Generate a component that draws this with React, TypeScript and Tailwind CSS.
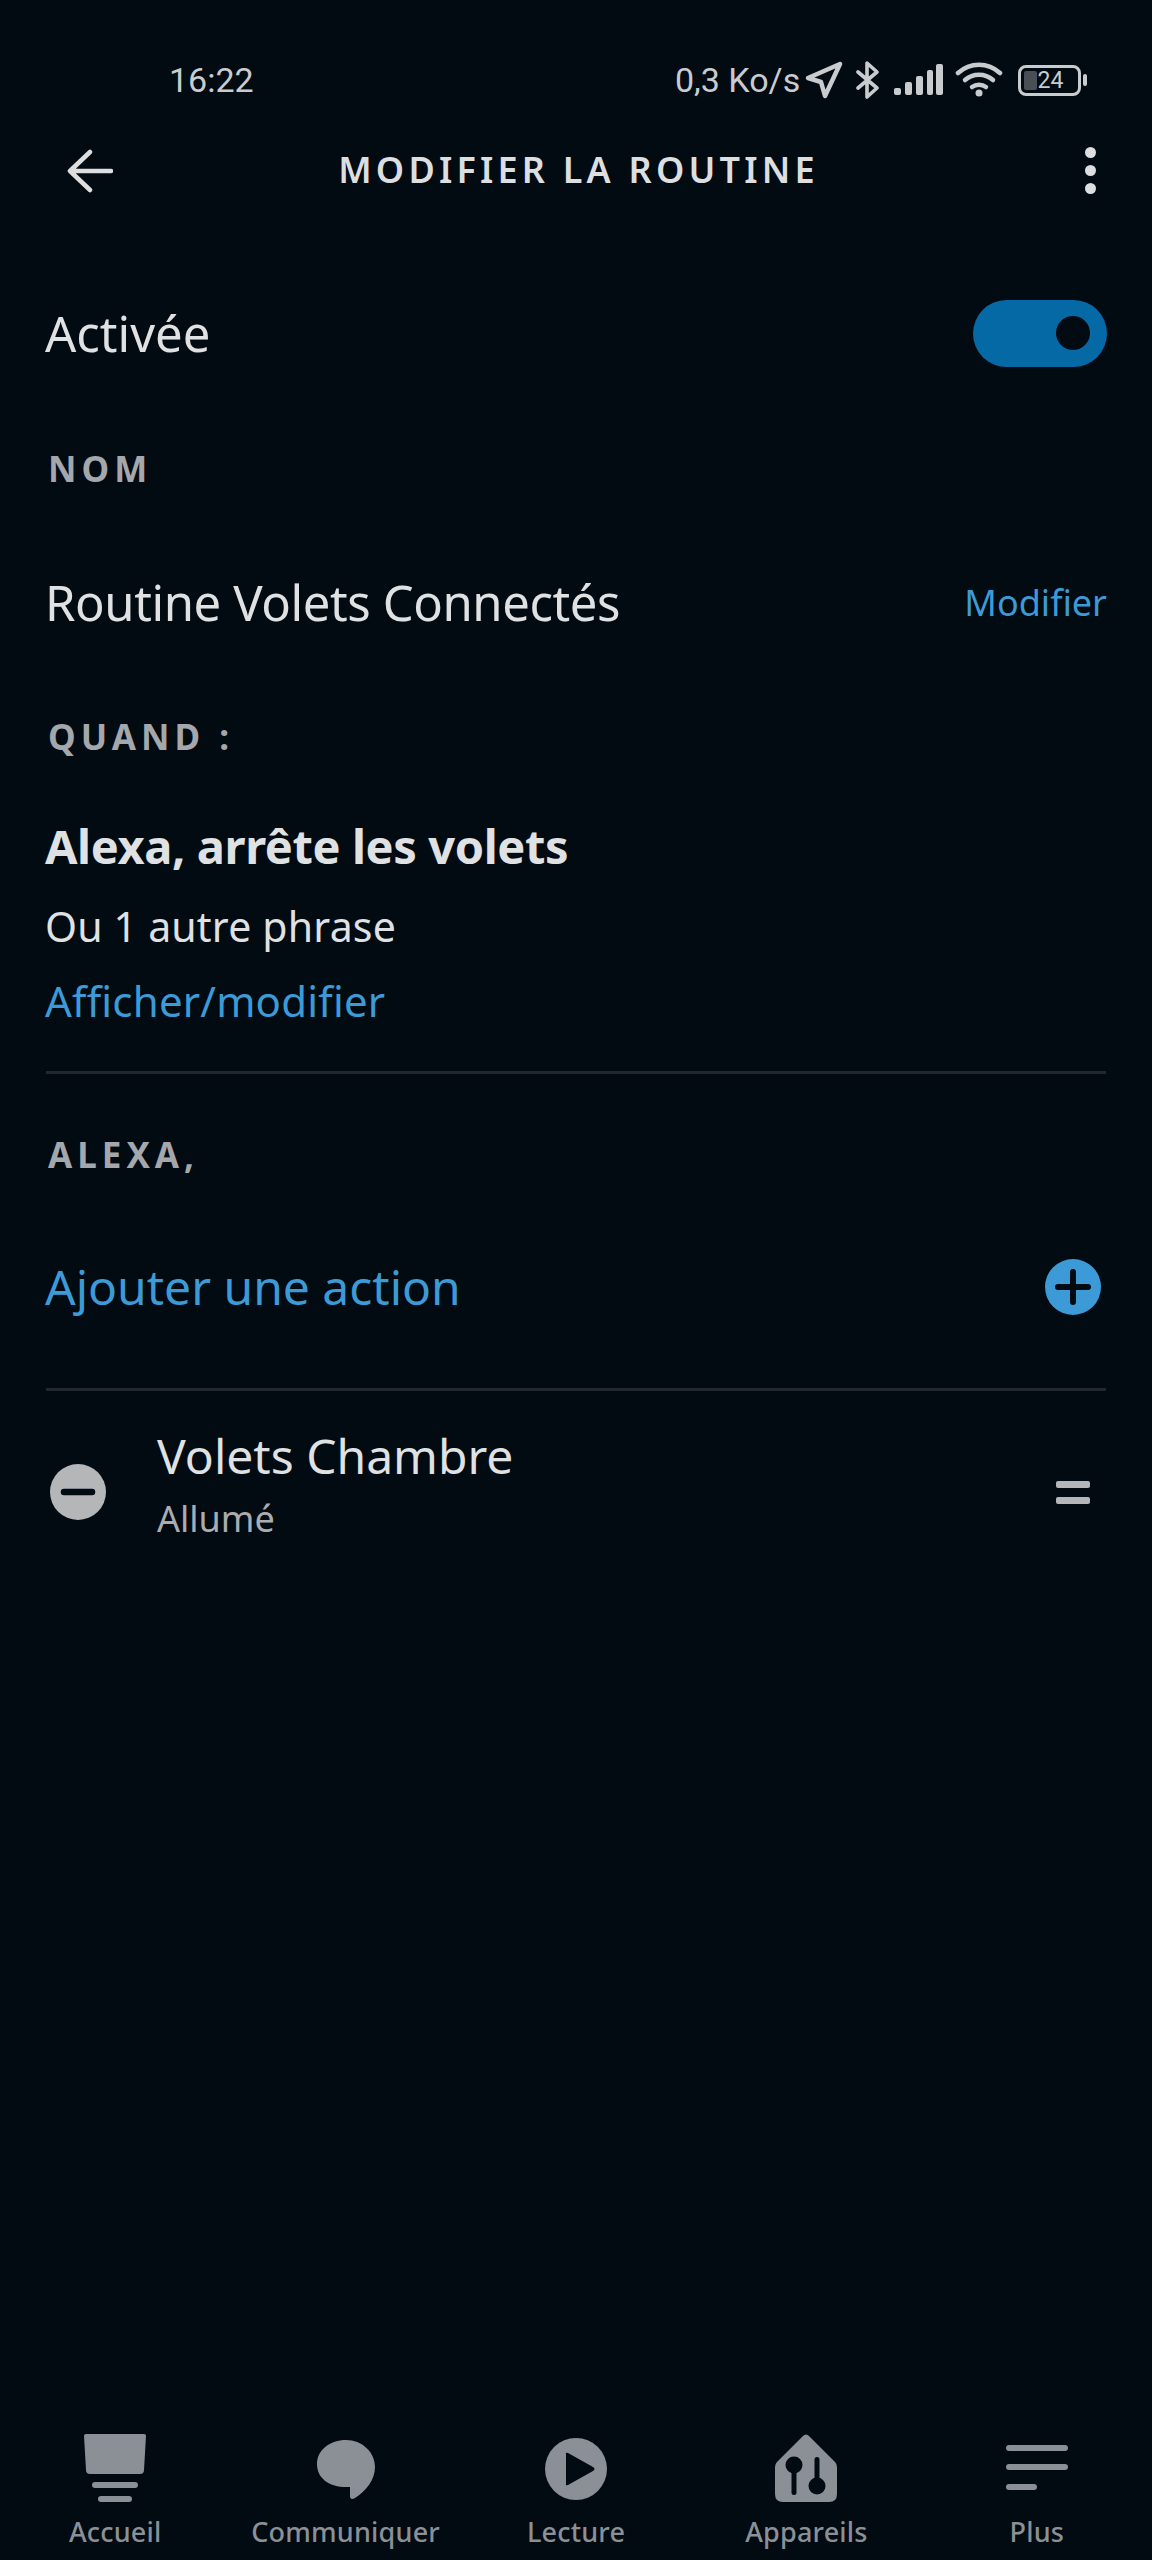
import React from 'react';

const font = { fontFamily: '"Noto Sans", sans-serif' };

const SectionLabel = ({ children, className }: { children: React.ReactNode; className: string }) => (
  <div className={`flex items-center pl-[48px] text-[35px] font-bold leading-none tracking-[5px] text-[#a4a7ab] ${className}`}>
    {children}
  </div>
);

const Divider = () => <div className="mx-[46px] h-[3px] bg-[#23282f]" />;

const StatusBar = () => (
  <div className="flex h-[124px] items-start justify-between pt-[60px] pl-[169px] pr-[65px] font-['Roboto'] text-[34px] leading-[40px] text-[#c9cccf]">
    <span>16:22</span>
    <div className="flex items-center">
      <span className="w-[130px]">0,3 Ko/s</span>
      <svg width="38" height="38" viewBox="0 0 38 38" fill="none" stroke="#c9cccf" strokeWidth="4.5" strokeLinejoin="round">
        <path d="M3 17 L35 3 L20 35 L16 21 Z" />
      </svg>
      <svg className="ml-[13px]" width="24" height="38" viewBox="0 0 24 38" fill="none" stroke="#c9cccf" strokeWidth="3.6" strokeLinecap="round" strokeLinejoin="round">
        <path d="M2 11 L21 27 L11 36 L11 2 L21 11 L2 27" />
      </svg>
      <svg className="ml-[14px]" width="49" height="32" viewBox="0 0 49 32" fill="#c9cccf">
        <rect x="0" y="24" width="7" height="7" rx="2" />
        <rect x="11" y="18" width="7" height="13" rx="2" />
        <rect x="22" y="12" width="7" height="19" rx="2" />
        <rect x="33" y="6" width="6" height="25" rx="2" />
        <rect x="42" y="0" width="7" height="31" rx="2" />
      </svg>
      <svg className="ml-[12px]" width="48" height="36" viewBox="0 0 48 36" fill="none" stroke="#c9cccf" strokeWidth="4.5" strokeLinecap="round">
        <path d="M3 11 C15 0 33 0 45 11" />
        <path d="M10 18 C18 11 30 11 38 18" />
        <path d="M17 25 C21 22 27 22 31 25" />
        <circle cx="24" cy="31" r="3.5" fill="#c9cccf" stroke="none" />
      </svg>
      <div className="relative ml-[15px] flex h-[31px] w-[63px] items-center justify-center rounded-[8px] border-[3px] border-[#c9cccf] pl-[2px] text-[23px] leading-none">
        <div className="absolute top-[3px] bottom-[3px] left-[3px] w-[13px] rounded-[2px] bg-[#4a4e55]" />
        <span className="relative">24</span>
      </div>
      <div className="ml-[2px] h-[12px] w-[4px] rounded-[2px] bg-[#c9cccf]" />
    </div>
  </div>
);

const Header = () => (
  <div className="relative flex h-[92px] items-center justify-center">
    <svg className="absolute left-[67px] top-[25px]" width="46" height="44" viewBox="0 0 46 44" fill="none" stroke="#dcdee0" strokeWidth="4.5" strokeLinecap="round" strokeLinejoin="round">
      <path d="M44 22 L3 22 M23 3 L3 22 L23 41" />
    </svg>
    <span className="ml-[5px] text-[36px] font-semibold leading-none tracking-[4.2px] text-[#dcdee0]">MODIFIER LA ROUTINE</span>
    <div className="absolute right-[56px] top-[23px] flex flex-col gap-[7px]">
      <div className="h-[11px] w-[11px] rounded-full bg-[#dcdee0]" />
      <div className="h-[11px] w-[11px] rounded-full bg-[#dcdee0]" />
      <div className="h-[11px] w-[11px] rounded-full bg-[#dcdee0]" />
    </div>
  </div>
);

const NavItem = ({ label, icon }: { label: string; icon: React.ReactNode }) => (
  <div className="flex flex-col items-center">
    <div className="flex h-[70px] items-end">{icon}</div>
    <span className="mt-[12px] text-[27px] font-medium leading-[36px] tracking-[0.2px] text-[#8b9096]">{label}</span>
  </div>
);

const BottomNav = () => (
  <div className="grid h-[128px] grid-cols-5">
    <NavItem
      label="Accueil"
      icon={
        <svg width="62" height="68" viewBox="0 0 62 68" fill="#8b9096">
          <path d="M2 0 H60 Q62 0 62 2 L60 36 Q60 40 56 40 H6 Q2 40 2 36 L0 2 Q0 0 2 0 Z" />
          <rect x="8" y="48" width="46" height="6" rx="3" />
          <rect x="14" y="62" width="34" height="6" rx="3" />
        </svg>
      }
    />
    <NavItem
      label="Communiquer"
      icon={
        <svg className="mb-[2px]" width="58" height="60" viewBox="0 0 58 60" fill="#8b9096">
          <path d="M29 0 C45 0 58 12 58 27 C58 40 49 51 38 58 C35 60 33 59 33 56 L33 47 C32 47 30 47 29 47 C13 47 0 39 0 24 C0 10 13 0 29 0 Z" />
        </svg>
      }
    />
    <NavItem
      label="Lecture"
      icon={
        <svg className="mb-[2px]" width="62" height="62" viewBox="0 0 62 62">
          <circle cx="31" cy="31" r="31" fill="#8b9096" />
          <path d="M21 16 Q20 14 23 15 L48 29 Q51 31 48 33 L23 47 Q20 48 21 46 Z" fill="#020a12" />
        </svg>
      }
    />
    <NavItem
      label="Appareils"
      icon={
        <svg width="62" height="68" viewBox="0 0 62 68">
          <path d="M28 2 Q31 -1 34 2 L60 28 Q62 30 62 33 V60 Q62 68 54 68 H8 Q0 68 0 60 V33 Q0 30 2 28 Z" fill="#8b9096" />
          <circle cx="19" cy="31" r="8.5" fill="#020a12" />
          <rect x="16.5" y="34" width="5" height="27" rx="2.5" fill="#020a12" />
          <circle cx="42" cy="52" r="8.5" fill="#020a12" />
          <rect x="39.5" y="23" width="5" height="27" rx="2.5" fill="#020a12" />
        </svg>
      }
    />
    <NavItem
      label="Plus"
      icon={
        <svg className="mb-[11px]" width="62" height="46" viewBox="0 0 62 46" fill="#8b9096">
          <rect x="0" y="0" width="62" height="6" rx="3" />
          <rect x="0" y="19" width="62" height="6" rx="3" />
          <rect x="0" y="39" width="31" height="6" rx="3" />
        </svg>
      }
    />
  </div>
);

export default function App() {
  return (
    <div className="flex h-[2560px] w-[1152px] flex-col bg-[#020a12] text-[#dfe1e3]" style={font}>
      <StatusBar />
      <Header />

      <div className="mt-[29px] mb-[17px] flex h-[176px] items-center justify-between pl-[45px] pr-[45px]">
        <span className="text-[49px] leading-none">Activée</span>
        <div className="flex h-[67px] w-[134px] items-center justify-end rounded-full bg-[#0569a6] pr-[17px]">
          <div className="h-[34px] w-[34px] rounded-full bg-[#020a12]" />
        </div>
      </div>

      <SectionLabel className="h-[60px]">NOM</SectionLabel>

      <div className="flex h-[208px] items-center justify-between pl-[45px] pr-[45px]">
        <span className="text-[49px] leading-none tracking-[-0.4px]">Routine Volets Connectés</span>
        <span className="pt-[2px] text-[36px] leading-none text-[#3c9bd6]">Modifier</span>
      </div>

      <SectionLabel className="h-[60px]">QUAND :</SectionLabel>

      <div className="flex flex-col pl-[45px] pt-[47px]">
        <span className="text-[47px] font-bold leading-[66px] tracking-[-0.4px]">Alexa, arrête les volets</span>
        <span className="mt-[19px] text-[41px] leading-[56px] tracking-[0.2px]">Ou 1 autre phrase</span>
        <span className="mt-[19px] text-[42px] leading-[56px] tracking-[0.2px] text-[#3c9bd6]">Afficher/modifier</span>
      </div>

      <div className="mt-[42px]">
        <Divider />
      </div>

      <SectionLabel className="mt-[50px] h-[60px] tracking-[5.5px]">ALEXA,</SectionLabel>

      <div className="flex h-[204px] items-center justify-between pl-[45px] pr-[51px] pt-[2px]">
        <span className="text-[48px] leading-none text-[#3c9bd6]">Ajouter une action</span>
        <svg width="56" height="56" viewBox="0 0 56 56">
          <circle cx="28" cy="28" r="28" fill="#3c9bd6" />
          <path d="M28 13 V43 M13 28 H43" stroke="#020a12" strokeWidth="6" strokeLinecap="round" />
        </svg>
      </div>

      <Divider />

      <div className="flex h-[202px] items-center pl-[50px] pr-[62px]">
        <svg width="56" height="56" viewBox="0 0 56 56">
          <circle cx="28" cy="28" r="28" fill="#b4b6b8" />
          <path d="M14 28 H42" stroke="#020a12" strokeWidth="6.5" strokeLinecap="round" />
        </svg>
        <div className="mb-[15px] ml-[51px] flex flex-1 flex-col">
          <span className="text-[48px] leading-[60px]">Volets Chambre</span>
          <span className="mt-[9px] text-[36px] leading-[48px] text-[#a9acb0]">Allumé</span>
        </div>
        <div className="flex flex-col gap-[9px]">
          <div className="h-[7px] w-[34px] rounded-[2px] bg-[#b4b6b8]" />
          <div className="h-[7px] w-[34px] rounded-[2px] bg-[#b4b6b8]" />
        </div>
      </div>

      <div className="flex-1" />
      <BottomNav />
    </div>
  );
}
